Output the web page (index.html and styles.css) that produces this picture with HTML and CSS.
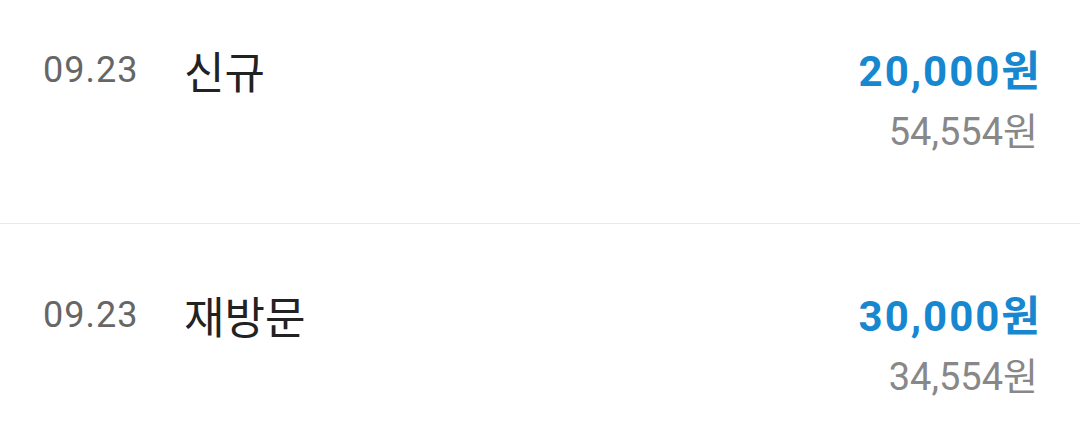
FILE: index.html
```html
<!DOCTYPE html>
<html lang="ko">
<head>
<meta charset="utf-8">
<link rel="stylesheet" href="styles.css">
</head>
<body>
<div class="list">
  <div class="row">
    <div class="date">09.23</div>
    <div class="title">신규</div>
    <div class="amounts">
      <div class="amount">20,000원</div>
      <div class="sub">54,554원</div>
    </div>
  </div>
  <div class="row">
    <div class="date">09.23</div>
    <div class="title">재방문</div>
    <div class="amounts">
      <div class="amount">30,000원</div>
      <div class="sub">34,554원</div>
    </div>
  </div>
</div>
</body>
</html>
```
FILE: styles.css
```css
html, body {
  margin: 0;
  padding: 0;
  background: #ffffff;
}
body {
  width: 1080px;
  height: 429px;
  overflow: hidden;
  font-family: Roboto, "Noto Sans CJK KR", sans-serif;
}
.list {
  margin-top: -21px;
}
.row {
  display: flex;
  align-items: flex-start;
  height: 245px;
  box-sizing: border-box;
  padding: 68px 42px 0 43px;
  border-bottom: 1px solid #e8e8e8;
}
.row:last-child {
  height: auto;
  border-bottom: none;
}
.date {
  width: 141px;
  font-size: 36px;
  line-height: 40px;
  letter-spacing: 1px;
  color: #666666;
  margin-top: 3px;
}
.title {
  flex: 1;
  font-size: 44px;
  line-height: 50px;
  color: #222222;
  margin-top: 2px;
}
.amounts {
  text-align: right;
}
.amount {
  font-size: 42px;
  line-height: 48px;
  font-weight: 700;
  letter-spacing: 2px;
  margin-right: -4px;
  margin-top: 1px;
  color: #1787d0;
}
.sub {
  font-size: 38px;
  line-height: 46px;
  color: #888888;
  margin-top: 13px;
}
```
